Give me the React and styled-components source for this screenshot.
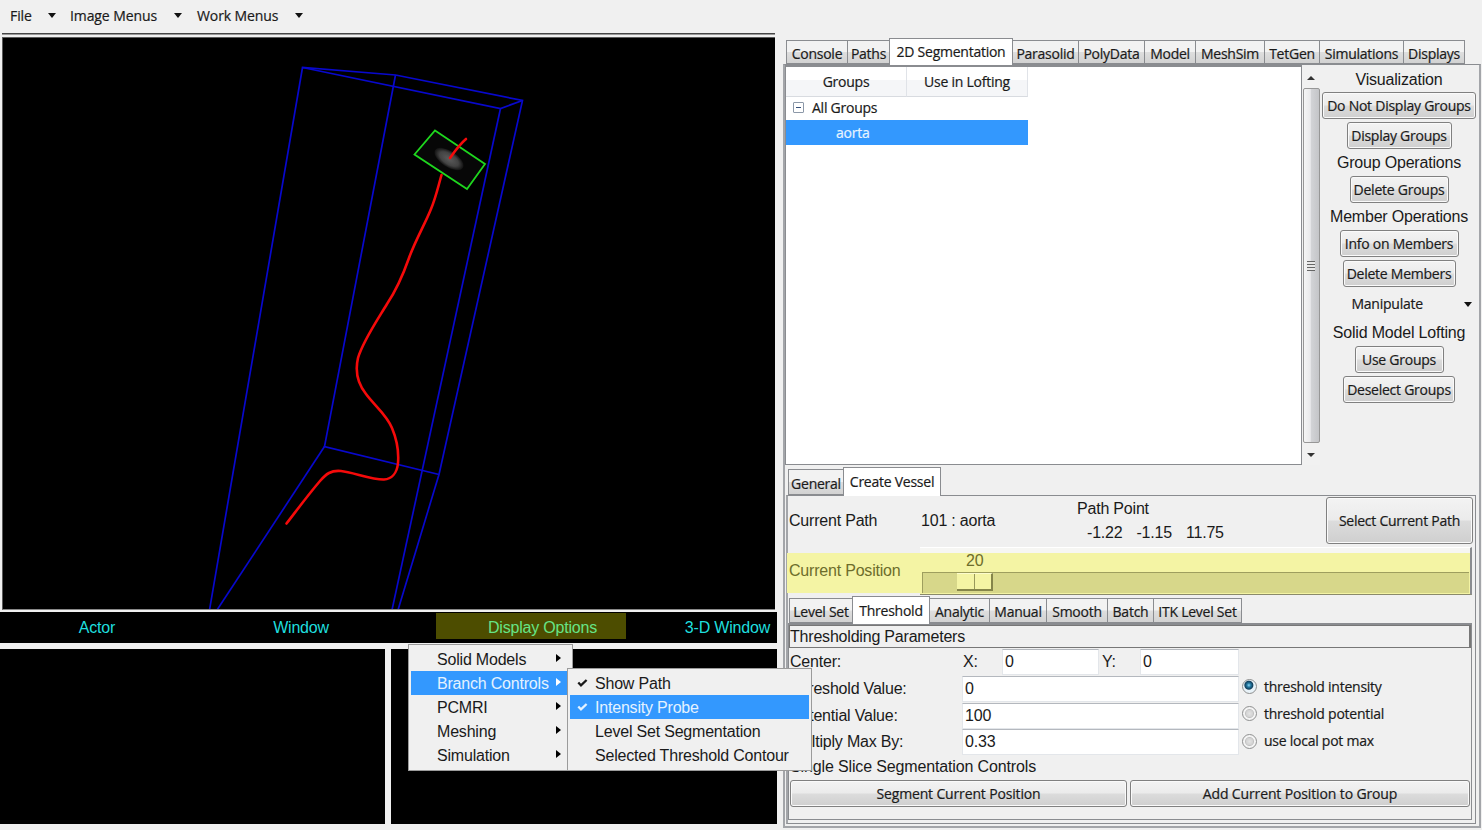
import React from "react";
import styled, { createGlobalStyle, css } from "styled-components";

const Global = createGlobalStyle`
  * { box-sizing: border-box; }
  html, body { margin: 0; padding: 0; }
  body {
    width: 1482px; height: 830px; overflow: hidden; background: #f0f0f0;
    font-family: "Liberation Sans", Arial, sans-serif; font-size: 16px; letter-spacing: -0.2px; color: #1a1a1a;
  }
`;

const uiFont = css`
  font-family: "Open Sans", "Noto Sans", sans-serif;
  font-size: 14px;
  letter-spacing: -0.25px;
  -webkit-text-stroke: 0.2px currentColor;
`;

const Shell = styled.div`
  position: relative;
  width: 1482px;
  height: 830px;
  display: flex;
  overflow: hidden;
  line-height: 18px;
  white-space: nowrap;
`;

/* ---------- left side ---------- */
const Left = styled.div`
  width: 783px;
  display: flex;
  flex-direction: column;
`;
const MenuBar = styled.nav`
  ${uiFont}
  letter-spacing: -0.1px;
  height: 33px;
  padding: 0 0 2px 10px;
  display: flex;
  align-items: center;
`;
const MenuButton = styled.div`
  width: ${(p) => p.$w}px;
  display: flex;
  align-items: center;
  justify-content: space-between;
  margin-right: ${(p) => p.$gap}px;
`;
const Down = styled.span`
  border: 4.5px solid transparent;
  border-top: 5px solid #111;
  border-bottom: 0;
`;
const Separator = styled.div`
  height: 2px;
  width: 773px;
  margin: 0 0 2px 2px;
  background: #454545;
  border-bottom: 1px solid #999;
`;
const Viewport = styled.div`
  width: 773px;
  height: 573px;
  margin-left: 2px;
  background: #000;
  border-top: 1px solid #5a5a5a;
  border-left: 1px solid #5a5a5a;
  border-bottom: 1px solid #888;
  svg { display: block; }
`;
const ViewBar = styled.div`
  width: 777px;
  height: 31px;
  margin-top: 2px;
  background: #000;
  color: #1fdede;
  display: grid;
  grid-template-columns: 194px 214px 28px 190px 151px;
  align-items: center;
  text-align: center;
  padding-top: 1px;
`;
const Highlighted = styled.div`
  grid-column: 4;
  height: 26px;
  margin-top: -4px;
  padding: 3px 0 0 23px;
  line-height: 23px;
  background: #4d4d00;
  color: #66e486;
`;
const RightLabel = styled.div`
  text-align: right;
  padding-right: 7px;
`;
const Panes = styled.div`
  width: 777px;
  height: 175px;
  margin-top: 6px;
  display: grid;
  grid-template-columns: 385px 386px;
  column-gap: 6px;
`;
const Pane = styled.div`
  background: #000;
`;

/* ---------- notebooks ---------- */
const Right = styled.div`
  width: 698px;
  padding-top: 37px;
  display: flex;
  flex-direction: column;
`;
const TabStrip = styled.div`
  ${uiFont}
  display: flex;
  align-items: flex-end;
  height: ${(p) => p.$h}px;
  padding-left: ${(p) => p.$pad}px;
  position: relative;
  z-index: 1;
`;
const Tab = styled.div`
  width: ${(p) => p.$w}px;
  height: ${(p) => (p.$on ? "100%" : "calc(100% - 3px)")};
  border: 1px solid #8a8c90;
  border-right-width: ${(p) => (p.$last || p.$on ? 1 : 0)}px;
  border-left-width: ${(p) => (p.$after ? 0 : 1)}px;
  border-bottom: ${(p) => (p.$on ? "0" : "1px solid #8a8c90")};
  background: ${(p) => (p.$on ? "#fff" : "linear-gradient(#f2f2f2 0 48%, #dedede 52%, #d2d2d2)")};
  margin-bottom: ${(p) => (p.$on ? -1 : 0)}px;
  display: flex;
  align-items: center;
  justify-content: center;
  line-height: 18px;
  padding-top: ${(p) => (p.$on ? 0 : 3)}px;
`;
const OuterPage = styled.div`
  flex: none;
  height: 764px;
  border: 2px solid #a3a5a9;
  border-top: 1px solid #8a8c90;
  display: flex;
  flex-direction: column;
`;
const Upper = styled.div`
  height: 401px;
  display: flex;
`;
const Tree = styled.div`
  ${uiFont}
  width: 517px;
  height: 400px;
  background: #fff;
  border: 1px solid #8a8c90;
  border-top-width: 2px;
`;
const TreeHead = styled.div`
  display: grid;
  grid-template-columns: 121px 121px;
  height: 28px;
  width: 242px;
`;
const HeadCell = styled.div`
  background: linear-gradient(#fff 0 45%, #f5f6f8 46%);
  border-right: 1px solid #e0e3e8;
  border-bottom: 1px solid #d8dbe0;
  text-align: center;
  line-height: 29px;
`;
const TreeRow = styled.div`
  width: 242px;
  height: 25px;
  line-height: ${(p) => (p.$on ? 23 : 26)}px;
  padding-left: ${(p) => p.$indent}px;
  display: flex;
  align-items: center;
  gap: 8px;
  background: ${(p) => (p.$on ? "#3398fe" : "transparent")};
  color: ${(p) => (p.$on ? "#e8f4ff" : "inherit")};
`;
const Collapse = styled.span`
  width: 11px;
  height: 11px;
  border: 1px solid #8c98a8;
  border-radius: 1px;
  display: flex;
  align-items: center;
  justify-content: center;
  &::after { content: ""; width: 5px; height: 1px; background: #35507a; }
`;
const Scroll = styled.div`
  width: 18px;
  height: 398px;
  margin: 2px 0 0 0;
  background: #f1f1f1;
  display: flex;
  flex-direction: column;
  align-items: center;
`;
const ScrollArrow = styled.div`
  height: 21px;
  display: flex;
  align-items: center;
  padding-top: ${(p) => (p.$up ? 0 : 3)}px;
  &::after {
    content: "";
    border: 4px solid transparent;
    ${(p) => (p.$up ? "border-top: 0; border-bottom: 4px solid #333;" : "border-bottom: 0; border-top: 4px solid #333;")}
  }
`;
const Thumb = styled.div`
  width: 17px;
  height: 355px;
  border: 1px solid #979797;
  border-radius: 2px;
  background: linear-gradient(90deg, #f5f5f5, #e9e9eb 42%, #d2d3d6 50%, #c4c5c8);
  display: flex;
  align-items: center;
  justify-content: center;
`;
const Grip = styled.span`
  width: 8px;
  height: 10px;
  background: repeating-linear-gradient(#666 0 1px, #e8e8e8 1px 3px);
`;
const Side = styled.aside`
  width: 157px;
  padding: 2px 1px 0 0;
  margin-left: 1px;
  display: flex;
  flex-direction: column;
  align-items: center;
  position: relative;
`;
const SideLabel = styled.div`
  height: ${(p) => p.$h || 27}px;
  line-height: ${(p) => p.$lh || 28}px;
`;
const Button = styled.div`
  ${uiFont}
  letter-spacing: ${(p) => p.$ls || -0.25}px;
  width: ${(p) => p.$w}px;
  height: ${(p) => p.$h || 27}px;
  margin-bottom: ${(p) => p.$mb || 0}px;
  flex: none;
  border: 1px solid #808080;
  border-radius: 3px;
  box-shadow: inset 0 0 0 1px #fafafa;
  background: linear-gradient(#f3f3f3, #ebebeb 49%, #dcdcdc 51%, #cfcfcf);
  display: flex;
  align-items: center;
  justify-content: center;
`;
const Manipulate = styled.div`
  ${uiFont}
  width: 155px;
  height: 33px;
  padding: 1px 5px 0 30px;
  display: flex;
  align-items: center;
  justify-content: space-between;
`;
const VesselPage = styled.div`
  margin: 0 3px 0 1px;
  width: 690px;
  height: 329px;
  border: 1px solid #8a8c90;
  border-left: 2px solid #a3a5a9;
  display: flex;
  flex-direction: column;
`;
const PathRow = styled.div`
  height: 51px;
  display: grid;
  grid-template-columns: 132px 156px 249px 147px;
  align-items: center;
  padding: 0 0 2px 1px;
`;
const PathPoint = styled.div`
  display: flex;
  flex-direction: column;
  gap: 6px;
`;
const Coords = styled.div`
  display: flex;
  gap: 14px;
  padding-left: 10px;
`;
const PositionRow = styled.div`
  display: grid;
  grid-template-columns: 132px 552px;
  height: 48px;
`;
const PositionLabel = styled.div`
  margin: 6px 0 2px -1px;
  padding-left: 2px;
  background: #f4f4a4;
  color: #6d6d2b;
  line-height: 35px;
`;
const Scale = styled.div`
  border: 1px solid #8a8a6a;
  border-top: 1px solid #fff;
  border-left: 0;
  border-right: 2px solid #8a8c90;
  background: linear-gradient(#f6f6f3 0 5px, #f4f4a4 5px);
  padding: 5px 0 0 2px;
`;
const ScaleValue = styled.div`
  color: #6d6d2b;
  padding: 0 0 1px 44px;
  height: 19px;
  line-height: 16px;
`;
const Trough = styled.div`
  height: 21px;
  margin-right: 1px;
  border-top: 1px solid #9e9e5e;
  border-left: 1px solid #9e9e5e;
  background: #d7d78a;
  padding-left: 34px;
`;
const Knob = styled.div`
  width: 36px;
  height: 18px;
  background: linear-gradient(90deg, transparent 17px, #98985a 17px 18px, transparent 18px), #f4f4a4;
  border-right: 2px solid #85854a;
  border-bottom: 2px solid #85854a;
  border-top: 1px solid #fcfccc;
`;
const ThresholdPage = styled.div`
  width: 684px;
  height: 197px;
  border: 1px solid #8a8c90;
  border-top: 2px solid #8a8c90;
  display: flex;
  flex-direction: column;
`;
const Heading = styled.div`
  height: 23px;
  line-height: 21px;
  border: 1px solid #777;
  border-right-width: 2px;
`;
const Form = styled.div`
  display: grid;
  grid-template-columns: 172px 277px 1fr;
  grid-template-rows: 27px 27px 26px 26px;
  padding: 1px 0 0 1px;
`;
const FieldLabel = styled.div`
  line-height: 26px;
`;
const Entry = styled.div`
  background: #fff;
  width: ${(p) => p.$w}px;
  height: 26px;
  border: 1px solid #e3e6ea;
  border-top-color: #b4b8be;
  padding-left: 2px;
  line-height: 24px;
`;
const CenterFields = styled.div`
  display: flex;
  align-items: flex-start;
`;
const AxisLabel = styled.div`
  line-height: 26px;
  width: ${(p) => p.$w}px;
  padding-left: ${(p) => p.$pad}px;
`;
const RadioRow = styled.div`
  ${uiFont}
  display: flex;
  align-items: center;
  gap: 7px;
  padding-left: 3px;
  height: ${(p) => p.$h || 21}px;
`;
const Radio = styled.span`
  width: 15px;
  height: 15px;
  border-radius: 50%;
  border: 1px solid #8e8f8f;
  background: ${(p) =>
    p.$on
      ? "radial-gradient(circle at 45% 40%, #8fd8f5 0, #2277a0 2px, #123f5c 4px, #e8f2f8 5px)"
      : "radial-gradient(circle, #e4e4e4 0, #d2d2d2 3.5px, #c0c0c0 4px, #f4f4f4 5px)"};
`;
const SliceLabel = styled.div`
  padding: 0 0 0 1px;
  height: 23px;
  line-height: 24px;
  letter-spacing: -0.14px;
`;
const ButtonRow = styled.div`
  display: flex;
  gap: 3px;
  padding-left: 1px;
  margin-top: 2px;
`;

/* ---------- popup menus ---------- */
const Popup = styled.div`
  position: absolute;
  left: ${(p) => p.$x}px;
  top: ${(p) => p.$y}px;
  width: ${(p) => p.$w}px;
  height: ${(p) => p.$h}px;
  background: #f0f0f0;
  border: 1px solid #9b9b9b;
  padding: 2px;
  z-index: 5;
`;
const Item = styled.div`
  height: 24.2px;
  line-height: 25px;
  display: flex;
  align-items: center;
  justify-content: space-between;
  padding: 0 ${(p) => p.$pr || 0}px 0 26px;
  background: ${(p) => (p.$on ? "#3398fe" : "transparent")};
  color: ${(p) => (p.$on ? "#e4f2ff" : "inherit")};
`;
const Sub = styled.span`
  border: 4.5px solid transparent;
  border-left: 5px solid ${(p) => (p.$on ? "#fff" : "#000")};
  border-right: 0;
  margin-top: -3px;
`;
const CheckItem = styled(Item)`
  justify-content: flex-start;
  padding-left: 7px;
`;
const CheckBox = styled.span`
  width: 18px;
  display: flex;
`;

const Check = () => (
  <svg width="11" height="10" viewBox="0 0 11 10">
    <path d="M1.3 4.4 L4 7.4 L9.6 2" fill="none" stroke="currentColor" strokeWidth="2.3" />
  </svg>
);

const mainTabs = [
  ["Console", 61], ["Paths", 42], ["2D Segmentation", 124], ["Parasolid", 65], ["PolyData", 66],
  ["Model", 51], ["MeshSim", 69], ["TetGen", 55], ["Simulations", 84], ["Displays", 62],
];
const methodTabs = [
  ["Level Set", 63], ["Threshold", 78], ["Analytic", 59], ["Manual", 57], ["Smooth", 61], ["Batch", 46], ["ITK Level Set", 89],
];

const Tabs = ({ items, active, h, pad }) => (
  <TabStrip $h={h} $pad={pad}>
    {items.map(([name, w], i) => (
      <Tab key={name} $w={w} $on={i === active} $after={i === active + 1} $last={i === items.length - 1}>
        {name}
      </Tab>
    ))}
  </TabStrip>
);

const Scene = () => (
  <svg width="772" height="571" viewBox="3 38 772 571">
    <defs>
      <radialGradient id="lumen">
        <stop offset="0" stopColor="#5c5c5c" />
        <stop offset="0.65" stopColor="#424242" />
        <stop offset="1" stopColor="#111" />
      </radialGradient>
    </defs>
    <g fill="none" stroke="#0808cc" strokeWidth="1.7">
      <path d="M209.500 610 L302.500 67.500 L395.500 75 L522.500 100.500 L439 474.500 L398 610" />
      <path d="M302.500 67.500 L500.500 108.500 L522.500 100.500" />
      <path d="M500.500 108.500 L392 610" />
      <path d="M395.500 75 L324.500 446.500 L439 474.500" />
      <path d="M324.500 446.500 L217 610" />
    </g>
    <path d="M435 130.500 L485 164 L467 189 L414.500 154.500 Z" fill="#070707" stroke="#1ed71e" strokeWidth="1.8" />
    <ellipse cx="449" cy="159" rx="16.500" ry="8" transform="rotate(33 449 159)" fill="url(#lumen)" />
    <g fill="none" stroke="#f50a0a" strokeWidth="2.6" strokeLinecap="round">
      <path d="M466 139 C459 145 455 151 450 158" />
      <path d="M441.500 175 C438 187 436 197 431 209 C425 224 415 241 409 258 C403 275 395 292 387 304 C378 319 363 341 358 358 C355 371 358 384 366 394 C374 405 387 415 392 428 C397 440 399 451 398 463 C397 474 391 479 384 479.500 C373 480 352 472 341 471 C331 470 326 474 320 481 C308 495 297 510 286.500 523.500" />
    </g>
  </svg>
);

export default function App() {
  return (
    <Shell>
      <Global />
      <Left>
        <MenuBar>
          <MenuButton $w={46} $gap={14}>File<Down /></MenuButton>
          <MenuButton $w={112} $gap={15}>Image Menus<Down /></MenuButton>
          <MenuButton $w={106} $gap={0}>Work Menus<Down /></MenuButton>
        </MenuBar>
        <Separator />
        <Viewport><Scene /></Viewport>
        <ViewBar>
          <div>Actor</div>
          <div>Window</div>
          <Highlighted>Display Options</Highlighted>
          <RightLabel>3-D Window</RightLabel>
        </ViewBar>
        <Panes><Pane /><Pane /></Panes>
      </Left>

      <Right>
        <Tabs items={mainTabs} active={2} h={27} pad={3} />
        <OuterPage>
          <Upper>
            <Tree>
              <TreeHead>
                <HeadCell>Groups</HeadCell>
                <HeadCell>Use in Lofting</HeadCell>
              </TreeHead>
              <TreeRow $indent={7}><Collapse />All Groups</TreeRow>
              <TreeRow $on $indent={50}>aorta</TreeRow>
            </Tree>
            <Scroll>
              <ScrollArrow $up />
              <Thumb><Grip /></Thumb>
              <ScrollArrow />
            </Scroll>
            <Side>
              <SideLabel $h={25} $lh={25}>Visualization</SideLabel>
              <Button $w={154} $mb={3}>Do Not Display Groups</Button>
              <Button $w={105}>Display Groups</Button>
              <SideLabel>Group Operations</SideLabel>
              <Button $w={99}>Delete Groups</Button>
              <SideLabel>Member Operations</SideLabel>
              <Button $w={119} $mb={3}>Info on Members</Button>
              <Button $w={113}>Delete Members</Button>
              <Manipulate>Manipulate<Down /></Manipulate>
              <SideLabel $h={26} $lh={26}>Solid Model Lofting</SideLabel>
              <Button $w={89} $mb={3}>Use Groups</Button>
              <Button $w={112}>Deselect Groups</Button>
            </Side>
          </Upper>

          <Tabs items={[["General", 55], ["Create Vessel", 98]]} active={1} h={29} pad={3} />
          <VesselPage>
            <PathRow>
              <div>Current Path</div>
              <div>101 : aorta</div>
              <PathPoint>
                <div>Path Point</div>
                <Coords><span>-1.22</span><span>-1.15</span><span>11.75</span></Coords>
              </PathPoint>
              <Button $w={147} $h={47}>Select Current Path</Button>
            </PathRow>
            <PositionRow>
              <PositionLabel>Current Position</PositionLabel>
              <Scale>
                <ScaleValue>20</ScaleValue>
                <Trough><Knob /></Trough>
              </Scale>
            </PositionRow>
            <Tabs items={methodTabs} active={1} h={28} pad={1} />
            <ThresholdPage>
              <Heading>Thresholding Parameters</Heading>
              <Form>
                <FieldLabel>Center:</FieldLabel>
                <CenterFields>
                  <AxisLabel $w={40} $pad={1}>X:</AxisLabel>
                  <Entry $w={97}>0</Entry>
                  <AxisLabel $w={41} $pad={3}>Y:</AxisLabel>
                  <Entry $w={99}>0</Entry>
                </CenterFields>
                <span />
                <FieldLabel>Threshold Value:</FieldLabel>
                <Entry $w={277}>0</Entry>
                <RadioRow><Radio $on />threshold intensity</RadioRow>
                <FieldLabel>Potential Value:</FieldLabel>
                <Entry $w={277}>100</Entry>
                <RadioRow><Radio />threshold potential</RadioRow>
                <FieldLabel>Multiply Max By:</FieldLabel>
                <Entry $w={277}>0.33</Entry>
                <RadioRow $h={24}><Radio />use local pot max</RadioRow>
              </Form>
              <SliceLabel>Single Slice Segmentation Controls</SliceLabel>
              <ButtonRow>
                <Button $w={337} $ls={-0.15}>Segment Current Position</Button>
                <Button $w={340} $ls={-0.13}>Add Current Position to Group</Button>
              </ButtonRow>
            </ThresholdPage>
          </VesselPage>
        </OuterPage>
      </Right>

      <Popup $x={408} $y={644} $w={165} $h={127}>
        <Item $pr={9}>Solid Models<Sub /></Item>
        <Item $pr={9} $on>Branch Controls<Sub $on /></Item>
        <Item $pr={9}>PCMRI<Sub /></Item>
        <Item $pr={9}>Meshing<Sub /></Item>
        <Item $pr={9}>Simulation<Sub /></Item>
      </Popup>
      <Popup $x={567} $y={668} $w={245} $h={103}>
        <CheckItem><CheckBox><Check /></CheckBox>Show Path</CheckItem>
        <CheckItem $on><CheckBox><Check /></CheckBox>Intensity Probe</CheckItem>
        <CheckItem><CheckBox />Level Set Segmentation</CheckItem>
        <CheckItem><CheckBox />Selected Threshold Contour</CheckItem>
      </Popup>
    </Shell>
  );
}
